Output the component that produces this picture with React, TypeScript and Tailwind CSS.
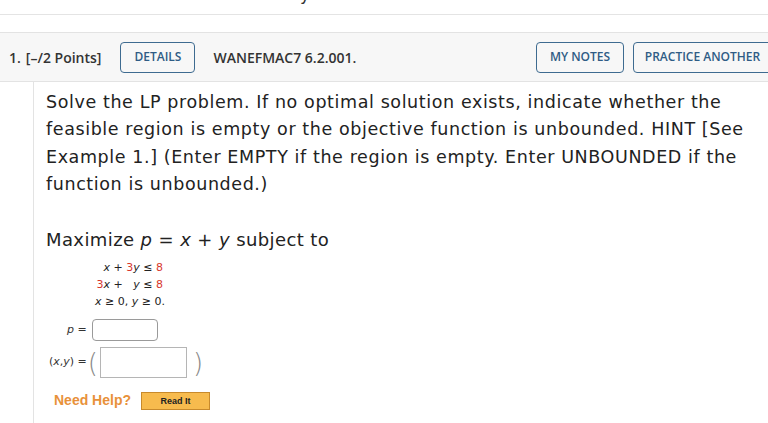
import React from 'react';

const red = 'text-[#d8372e]';
const verdana = "[font-family:'DejaVu_Sans',Verdana,sans-serif]";
const open = "[font-family:'Open_Sans',sans-serif]";
const arial = "[font-family:'Liberation_Sans',Arial,sans-serif]";

function Constraints() {
  return (
    <div className={`ml-[43px] flex w-[119px] flex-col items-end ${verdana} text-[11px] leading-[17px] text-[#222]`}>
      <div>
        <i>x</i> + <span className={red}>3</span>
        <i>y</i> ≤ <span className={red}>8</span>
      </div>
      <div>
        <span className={red}>3</span>
        <i>x</i> + &nbsp; <i>y</i> ≤ <span className={red}>8</span>
      </div>
      <div className="-mr-[2px]">
        <i>x</i> ≥ 0, <i>y</i> ≥ 0.
      </div>
    </div>
  );
}

export default function App() {
  return (
    <div className="h-[423px] w-[768px] overflow-hidden bg-white">
      <div className="h-[15px] overflow-hidden border-b border-[#e4e4e4]">
        <div className={`-mt-[16px] pl-[300px] ${verdana} text-[17px] leading-[20px] text-[#333]`}>
          y
        </div>
      </div>
      <div className="h-[17px]" />
      <div className={`flex h-[50px] items-center border-y border-[#e3e3e3] bg-[#f7f7f7] ${open} font-semibold text-[#333]`}>
        <span className="ml-[9px] text-[14px]">1.</span>
        <span className="ml-[5px] text-[14px]">[–/2 Points]</span>
        <button className="ml-[19px] h-[31px] w-[75px] rounded-[4px] border border-[#3e6b90] text-[12px] text-[#2f5c85]">
          DETAILS
        </button>
        <span className="ml-[18px] text-[14px]">WANEFMAC7 6.2.001.</span>
        <div className="flex-1" />
        <button className="h-[31px] w-[88px] rounded-[4px] border border-[#3e6b90] text-[12px] text-[#2f5c85]">
          MY NOTES
        </button>
        <button className="ml-[9px] -mr-[4px] h-[31px] w-[139px] shrink-0 rounded-[4px] border border-[#3e6b90] text-[12px] text-[#2f5c85]">
          PRACTICE ANOTHER
        </button>
      </div>
      <div className="flex h-[342px]">
        <div className="w-[33px] shrink-0" />
        <div className="flex-1 border-l border-[#e3e3e3]">
          <div className={`pl-[12px] pt-[7px] ${verdana} text-[17.5px] leading-[27.3px] tracking-[0.6px] text-[#222]`}>
            <div className="whitespace-nowrap">Solve the LP problem. If no optimal solution exists, indicate whether the</div>
            <div className="whitespace-nowrap">feasible region is empty or the objective function is unbounded. HINT [See</div>
            <div className="whitespace-nowrap">Example 1.] (Enter EMPTY if the region is empty. Enter UNBOUNDED if the</div>
            <div className="whitespace-nowrap">function is unbounded.)</div>
          </div>
          <div className={`mt-[28px] pl-[12px] ${verdana} text-[18px] leading-[28px] tracking-[0.4px] text-[#222]`}>
            Maximize <i>p</i> = <i>x</i> + <i>y</i> subject to
          </div>
          <div className="mt-[5px] -ml-[33px]">
            <Constraints />
          </div>
          <div className={`mt-[9px] flex items-center ${verdana} text-[11px] text-[#333]`}>
            <span className="ml-[33px]">
              <i>p</i> =
            </span>
            <div className="ml-[5px] h-[22px] w-[66px] rounded-[4px] border border-[#9a9a9a] bg-white" />
          </div>
          <div className={`mt-[6px] flex items-center ${verdana} text-[11px] text-[#333]`}>
            <span className="ml-[15px]">
              (<i>x</i>,<i>y</i>) =
            </span>
            <span className="ml-[1px] text-[26px] font-light leading-[30px] text-[#888]">(</span>
            <div className="ml-[2px] h-[31px] w-[87px] border border-[#b5b5b5] bg-white" />
            <span className="ml-[6px] text-[26px] font-light leading-[30px] text-[#888]">)</span>
          </div>
          <div className="mt-[12px] flex items-center">
            <span className={`ml-[20px] ${arial} text-[14px] font-bold text-[#e8913a]`}>
              Need Help?
            </span>
            <button className={`ml-[10px] h-[18px] w-[69px] border border-[#c88a2c] bg-[#f7bb4e] ${arial} text-[9px] font-bold leading-[16px] text-[#222]`}>
              Read It
            </button>
          </div>
        </div>
      </div>
    </div>
  );
}
